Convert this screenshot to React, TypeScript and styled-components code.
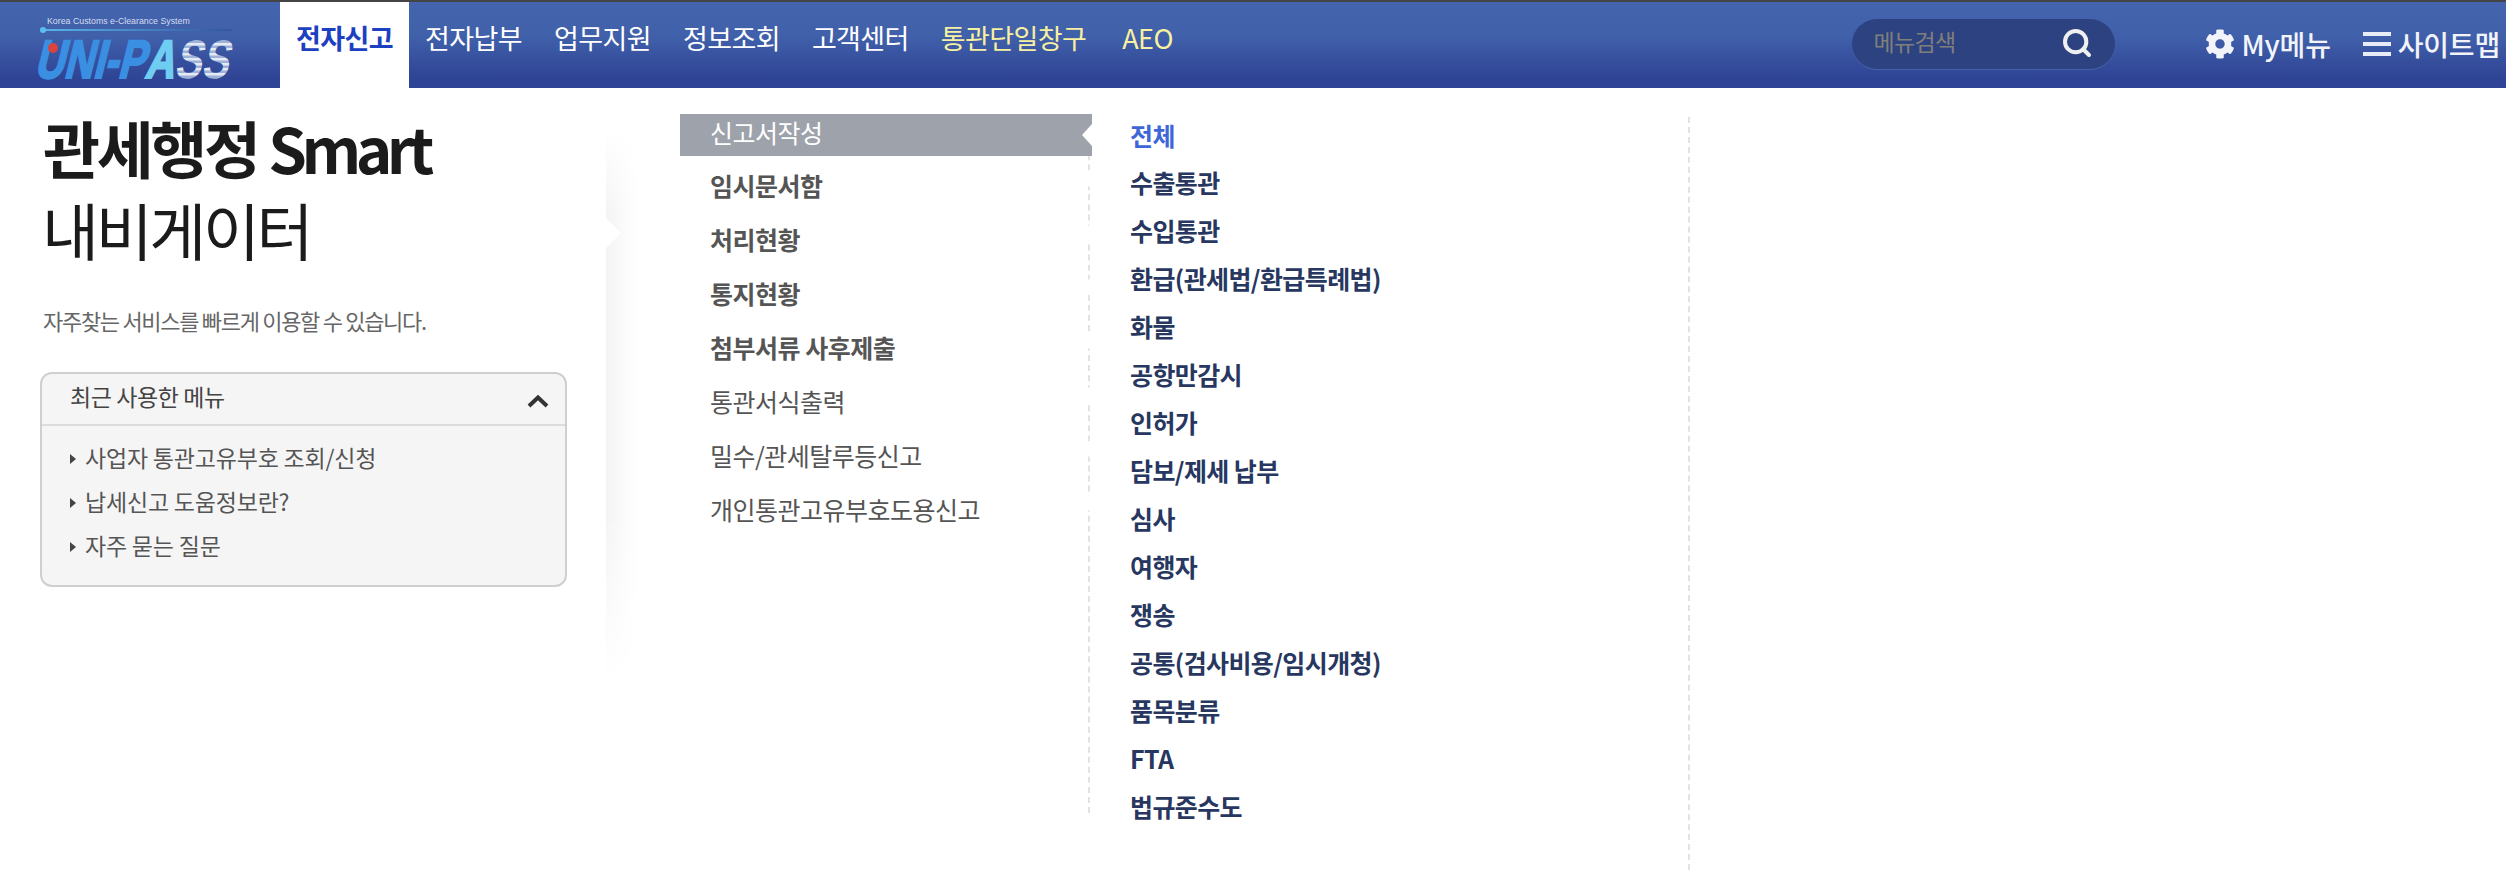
import React from 'react';
import styled, {createGlobalStyle} from 'styled-components';
import {Search} from 'lucide-react';
import {FaCog} from 'react-icons/fa';

const GlobalStyle = createGlobalStyle`
    html, body {
        margin: 0;
        padding: 0;
        background: #fff;
        overflow: hidden;
    }
    body {
        font-family: "Noto Sans CJK KR", "Noto Sans", sans-serif;
    }
    ul {
        margin: 0;
        padding: 0;
        list-style: none;
    }
`;

const Page = styled.div`
    width: 2506px;
    height: 870px;
    display: flex;
    flex-direction: column;
`;

const Header = styled.header`
    height: 86px;
    flex: none;
    display: flex;
    border-top: 2px solid #444;
    background: linear-gradient(180deg, #4464ae 0%, #4060aa 40%, #2f4495 88%, #2f4496 100%);
`;

const LogoBox = styled.div`
    width: 280px;
    flex: none;
    display: flex;
    align-items: flex-start;
`;

const Nav = styled.ul`
    display: flex;
`;

const NavItem = styled.li<{$active?: boolean; $accent?: boolean; $wide?: boolean}>`
    height: 86px;
    box-sizing: border-box;
    padding: 14px 16px 0;
    margin-left: ${p => (p.$wide ? 4 : 0)}px;
    font-size: 27px;
    line-height: 44px;
    letter-spacing: -0.6px;
    font-weight: ${p => (p.$active ? 700 : 400)};
    color: ${p => (p.$active ? '#1c40c0' : p.$accent ? '#f7f0a0' : '#fff')};
    background: ${p => (p.$active ? '#fff' : 'transparent')};
`;

const HeaderRight = styled.div`
    margin-left: auto;
    display: flex;
    align-items: center;
    height: 84px;
`;

const SearchBox = styled.div`
    width: 263px;
    height: 50px;
    box-sizing: border-box;
    margin-right: 90px;
    padding: 0 22px 6px 22px;
    display: flex;
    align-items: center;
    justify-content: space-between;
    border-radius: 25px;
    background: #2d4280;
    box-shadow: 0 1px 1px #4a62a6;
    color: #7f7f7c;
    font-size: 23px;
    letter-spacing: -0.7px;
`;

const SearchIcon = styled(Search)`
    width: 32px;
    height: 32px;
    color: #f0f0f0;
    margin-top: 4px;
`;

const ToolLink = styled.a<{$gap: number}>`
    display: flex;
    align-items: center;
    margin-right: ${p => p.$gap}px;
    gap: 7px;
    color: #f2f4fa;
    font-size: 28px;
    font-weight: 500;
    letter-spacing: -0.2px;
`;

const Hamburger = styled.span`
    width: 28px;
    height: 24px;
    display: block;
    background: linear-gradient(#e8ecf6 0 4px, transparent 4px 10px, #e8ecf6 10px 14px, transparent 14px 20px, #e8ecf6 20px 24px);
`;

const Main = styled.main`
    flex: 1;
    display: flex;
    min-height: 0;
`;

const Intro = styled.section`
    width: 606px;
    flex: none;
    box-sizing: border-box;
    padding: 18px 39px 0 40px;
    position: relative;

    &::before {
        content: "";
        position: absolute;
        top: 42px;
        bottom: 190px;
        left: 100%;
        width: 32px;
        background: linear-gradient(90deg, #f4f4f4, #fff);
        mask-image: linear-gradient(180deg, transparent, #000 15%, #000 70%, transparent);
    }

    &::after {
        content: "";
        position: absolute;
        top: 130px;
        left: 100%;
        width: 15px;
        height: 30px;
        background: #fff;
        clip-path: polygon(0 0, 100% 50%, 0 100%);
    }
`;

const Title = styled.h1<{$light?: boolean}>`
    margin: 0;
    padding-left: ${p => (p.$light ? 2 : 3)}px;
    font-size: 62px;
    line-height: 82px;
    letter-spacing: -3.4px;
    font-weight: ${p => (p.$light ? 400 : 700)};
    color: #1b1b1b;
`;

const TitleLatin = styled.span`
    letter-spacing: -5.5px;
`;

const Lead = styled.p`
    margin: 35px 0 37px 3px;
    font-size: 22px;
    line-height: 30px;
    letter-spacing: -1.3px;
    color: #666;
`;

const RecentBox = styled.div`
    height: 215px;
    box-sizing: border-box;
    border: 2px solid #cfcfcf;
    border-radius: 12px;
    background: #f5f5f5;
`;

const RecentHead = styled.div`
    height: 52px;
    box-sizing: border-box;
    padding: 0 16px 6px 28px;
    display: flex;
    align-items: center;
    justify-content: space-between;
    border-bottom: 2px solid #dcdcdc;
    font-size: 23px;
    letter-spacing: -0.4px;
    color: #444;
`;

const Chevron = styled.svg`
    width: 22px;
    height: 14px;
    margin-top: 9px;
`;

const RecentList = styled.ul`
    padding: 9px 0 0 28px;
`;

const RecentItem = styled.li`
    height: 44px;
    display: flex;
    align-items: center;
    gap: 9px;
    font-size: 23px;
    letter-spacing: -0.2px;
    color: #555;

    &::before {
        content: "";
        width: 0;
        height: 0;
        margin-top: 3px;
        border-left: 6px solid #444;
        border-top: 5px solid transparent;
        border-bottom: 5px solid transparent;
    }
`;

const SideMenu = styled.ul`
    width: 410px;
    height: 699px;
    flex: none;
    box-sizing: border-box;
    margin: 26px 0 0 74px;
    border-right: 2px dashed #e2e2e2;
`;

const SideItem = styled.li<{$active?: boolean; $bold?: boolean}>`
    position: relative;
    height: ${p => (p.$active ? 42 : 54)}px;
    width: 412px;
    margin-bottom: ${p => (p.$active ? 2 : 0)}px;
    padding-left: 30px;
    box-sizing: border-box;
    display: flex;
    align-items: center;
    font-size: 25px;
    letter-spacing: -0.5px;
    padding-bottom: ${p => (p.$active ? 7 : 0)}px;
    font-weight: ${p => (p.$bold ? 700 : 400)};
    color: ${p => (p.$active ? '#fff' : '#555')};
    background: ${p => (p.$active ? '#9ea2ab' : 'transparent')};

    &::after {
        content: "${p => (p.$active ? ' ' : '')}";
        position: absolute;
        right: 0;
        top: 10px;
        width: 10px;
        height: 22px;
        background: #fff;
        clip-path: polygon(100% 0, 0 50%, 100% 100%);
    }
`;

const SubMenu = styled.ul`
    width: 600px;
    flex: none;
    box-sizing: border-box;
    margin-top: 29px;
    padding: 0 0 0 40px;
    border-right: 2px dashed #e2e2e2;
`;

const SubItem = styled.li<{$active?: boolean}>`
    height: ${p => (p.$active ? 41 : 48)}px;
    padding-bottom: ${p => (p.$active ? 6 : 0)}px;
    box-sizing: border-box;
    display: flex;
    align-items: center;
    font-size: 25px;
    letter-spacing: -0.6px;
    font-weight: 700;
    color: ${p => (p.$active ? '#3f66d8' : '#27375f')};
`;

const LogoText = styled.text`
    font-family: "Liberation Sans", sans-serif;
`;

const LogoSvg = styled.svg`
    overflow: visible;
`;

const Logo = () => (
    <LogoSvg width="250" height="84" viewBox="0 0 250 84">
        <defs>
            <linearGradient id="ruleFill" x1="0" x2="1" y1="0" y2="0">
                <stop offset="0" stopColor="#59b4ea"/>
                <stop offset="1" stopColor="#35569f"/>
            </linearGradient>
            <pattern id="ssStripes" width="6" height="5" patternUnits="userSpaceOnUse">
                <rect width="6" height="3" fill="#e4eaf4"/>
                <rect y="3" width="6" height="2" fill="#9db2d8"/>
            </pattern>
        </defs>
        <LogoText x="47" y="22" fontSize="8.8" fill="#d4dcf0">Korea Customs e-Clearance System</LogoText>
        <rect x="42" y="27" width="190" height="2" fill="url(#ruleFill)"/>
        <circle cx="43" cy="28" r="3" fill="#5cc0ee"/>
        <g transform="translate(34 76) skewX(-14) scale(0.75 1)">
            <LogoText fontSize="54" fontWeight="700" stroke="#3a8fe2" strokeWidth="2.2">
                <tspan fill="#3a8fe2">UNI-P</tspan>
                <tspan fill="#6fcdf2" stroke="#6fcdf2">A</tspan>
                <tspan fill="url(#ssStripes)" stroke="none">SS</tspan>
            </LogoText>
        </g>
        <circle cx="53" cy="46" r="5" fill="#d8443e"/>
    </LogoSvg>
);

const navItems = ['전자납부', '업무지원', '정보조회', '고객센터'];
const sideMenu: [string, boolean][] = [
    ['임시문서함', true],
    ['처리현황', true],
    ['통지현황', true],
    ['첨부서류 사후제출', true],
    ['통관서식출력', false],
    ['밀수/관세탈루등신고', false],
    ['개인통관고유부호도용신고', false],
];
const subMenu = [
    '수출통관', '수입통관', '환급(관세법/환급특례법)', '화물', '공항만감시', '인허가', '담보/제세 납부',
    '심사', '여행자', '쟁송', '공통(검사비용/임시개청)', '품목분류', 'FTA', '법규준수도',
];
const recent = ['사업자 통관고유부호 조회/신청', '납세신고 도움정보란?', '자주 묻는 질문'];

const App = () => {
    return (
        <Page>
            <GlobalStyle/>
            <Header>
                <LogoBox><Logo/></LogoBox>
                <Nav>
                    <NavItem $active>전자신고</NavItem>
                    {navItems.map(item => <NavItem key={item}>{item}</NavItem>)}
                    <NavItem $accent>통관단일창구</NavItem>
                    <NavItem $accent $wide>AEO</NavItem>
                </Nav>
                <HeaderRight>
                    <SearchBox>
                        메뉴검색
                        <SearchIcon strokeWidth={3}/>
                    </SearchBox>
                    <ToolLink $gap={32}><FaCog size={30}/>My메뉴</ToolLink>
                    <ToolLink $gap={6}><Hamburger/>사이트맵</ToolLink>
                </HeaderRight>
            </Header>
            <Main>
                <Intro>
                    <Title>관세행정 <TitleLatin>Smart</TitleLatin></Title>
                    <Title $light>내비게이터</Title>
                    <Lead>자주찾는 서비스를 빠르게 이용할 수 있습니다.</Lead>
                    <RecentBox>
                        <RecentHead>
                            최근 사용한 메뉴
                            <Chevron viewBox="0 0 22 14">
                                <path d="M2 12 L11 3.5 L20 12" fill="none" stroke="#333" strokeWidth="4"/>
                            </Chevron>
                        </RecentHead>
                        <RecentList>
                            {recent.map(item => <RecentItem key={item}>{item}</RecentItem>)}
                        </RecentList>
                    </RecentBox>
                </Intro>
                <SideMenu>
                    <SideItem $active>신고서작성</SideItem>
                    {sideMenu.map(([label, bold]) => <SideItem key={label} $bold={bold}>{label}</SideItem>)}
                </SideMenu>
                <SubMenu>
                    <SubItem $active>전체</SubItem>
                    {subMenu.map(item => <SubItem key={item}>{item}</SubItem>)}
                </SubMenu>
            </Main>
        </Page>
    );
};

export default App;
